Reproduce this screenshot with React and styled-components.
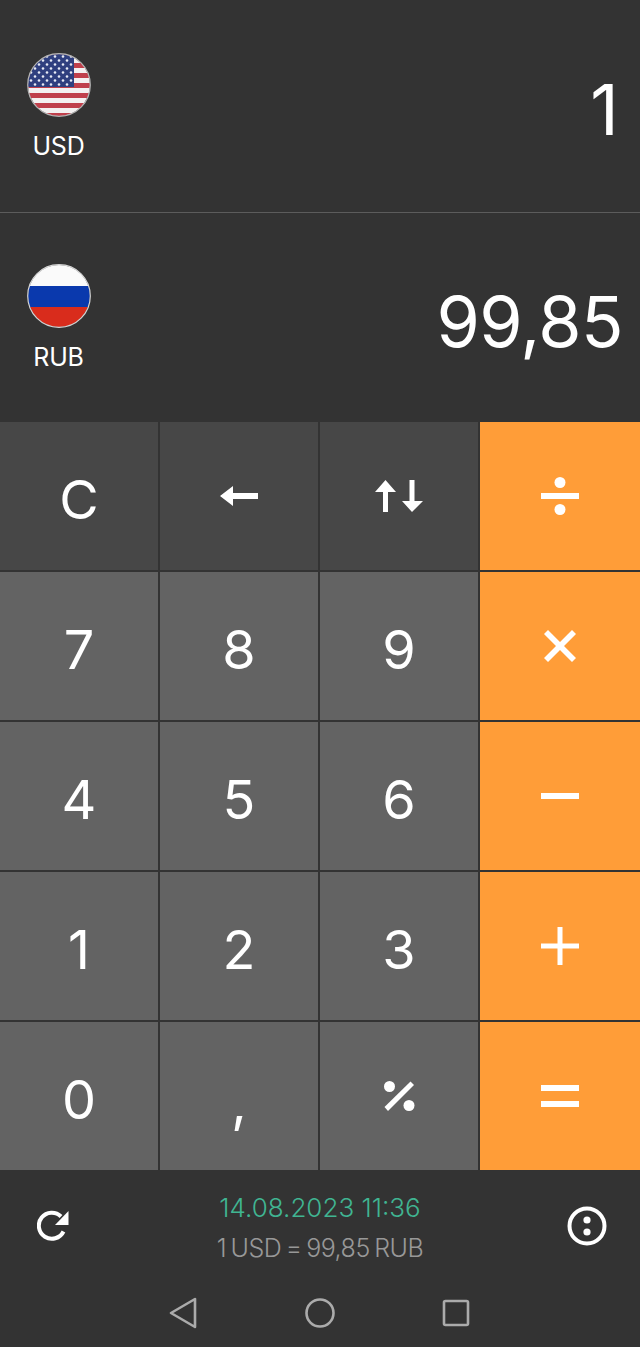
import React from 'react';
import styled, { createGlobalStyle } from 'styled-components';

const GlobalStyle = createGlobalStyle`
  html, body {
    margin: 0;
    padding: 0;
    background: #333333;
  }
  * {
    box-sizing: border-box;
  }
`;

const Screen = styled.div`
  width: 640px;
  height: 1347px;
  display: flex;
  flex-direction: column;
  background: #333333;
  color: #ffffff;
  font-family: Inter, 'Liberation Sans', sans-serif;
  overflow: hidden;
`;

const CurrencyRow = styled.div`
  height: ${(p) => p.$height}px;
  display: flex;
  align-items: center;
  justify-content: space-between;
  padding-right: ${(p) => p.$inset}px;
  border-bottom: ${(p) => (p.$divider ? '1px solid #5c5c5c' : 'none')};
`;

const Currency = styled.div`
  width: 117px;
  display: flex;
  flex-direction: column;
  align-items: center;
  gap: 14px;
  padding-top: ${(p) => (p.$nudge ? '2px' : '0')};
`;

const FlagCircle = styled.svg`
  width: 64px;
  height: 64px;
  display: block;
`;

const Code = styled.div`
  font-size: 25px;
  line-height: 30px;
  font-weight: 400;
  letter-spacing: -0.2px;
`;

const Amount = styled.div`
  font-size: 70px;
  line-height: 84px;
  font-weight: 400;
  letter-spacing: -0.6px;
  padding-top: 8px;
`;

const Keypad = styled.div`
  display: grid;
  grid-template-columns: 158px 158px 158px 160px;
  grid-auto-rows: 148px;
  gap: 2px;
  background: #333333;
`;

const keyColors = {
  fn: '#474747',
  num: '#636363',
  op: '#ff9d38',
};

const Key = styled.div`
  display: flex;
  align-items: center;
  justify-content: center;
  background: ${(p) => keyColors[p.$kind]};
  font-size: 54px;
  font-weight: 400;
  line-height: 1;
  padding-top: ${(p) => (p.$drop ? '14px' : '8px')};
`;

const IconKey = styled(Key)`
  padding-top: 0;
`;

const KeyIcon = styled.svg`
  display: block;
  fill: #ffffff;
  stroke: none;
`;

const Footer = styled.div`
  flex: 1;
  display: flex;
  flex-direction: column;
`;

const Status = styled.div`
  height: 112px;
  display: flex;
  align-items: center;
  justify-content: space-between;
  padding: 0 33px 0 37px;
`;

const StatusText = styled.div`
  display: flex;
  flex-direction: column;
  align-items: center;
  gap: 10px;
  padding: 4px 0 0 4px;
  line-height: 30px;
  font-weight: 300;
`;

const Updated = styled.div`
  color: #40b592;
  font-size: 26px;
`;

const Rate = styled.div`
  color: #989898;
  font-size: 25px;
  letter-spacing: -0.5px;
  word-spacing: -2px;
`;

const ToolIcon = styled.svg`
  display: block;
  flex: none;
`;

const NavBar = styled.div`
  flex: 1;
  display: flex;
  align-items: flex-start;
  justify-content: center;
  gap: 106px;
  padding-top: 15px;
`;

const NavIcon = styled.svg`
  display: block;
  width: 30px;
  height: 32px;
  fill: none;
  stroke: #ababab;
  stroke-width: 2.6;
  stroke-linejoin: round;
`;

const stars = [];
for (let row = 0; row < 8; row += 1) {
  const count = row % 2 === 0 ? 6 : 5;
  for (let col = 0; col < count; col += 1) {
    stars.push({
      x: (row % 2 === 0 ? 4 : 8) + col * 8,
      y: 3.5 + row * 4,
    });
  }
}

const UsaFlag = () => (
  <FlagCircle viewBox="0 0 64 64">
    <defs>
      <clipPath id="usaClip">
        <circle cx="32" cy="32" r="31" />
      </clipPath>
    </defs>
    <g clipPath="url(#usaClip)">
      <rect width="64" height="64" fill="#f4f1f1" />
      {Array.from({ length: 7 }).map((_, i) => (
        <rect key={i} y={i * 10} width="64" height="5" fill="#c0404c" />
      ))}
      <rect width="47" height="34" fill="#2f3f7f" />
      {stars.map((s, i) => (
        <circle key={i} cx={s.x} cy={s.y} r="1.3" fill="#e8ebf5" />
      ))}
    </g>
    <circle cx="32" cy="32" r="31.3" fill="none" stroke="#b5b5b5" strokeWidth="1.2" />
  </FlagCircle>
);

const RussiaFlag = () => (
  <FlagCircle viewBox="0 0 64 64">
    <defs>
      <clipPath id="rusClip">
        <circle cx="32" cy="32" r="31" />
      </clipPath>
    </defs>
    <g clipPath="url(#rusClip)">
      <rect width="64" height="22" fill="#fafafa" />
      <rect y="22" width="64" height="21" fill="#0a39ad" />
      <rect y="43" width="64" height="21" fill="#d92c1c" />
    </g>
    <circle cx="32" cy="32" r="31.3" fill="none" stroke="#d6d6d6" strokeWidth="1.2" />
  </FlagCircle>
);

const Backspace = () => (
  <KeyIcon width="38" height="20" viewBox="0 0 38 20">
    <path d="M0 10 L13 0 V7 H38 V13 H13 V20 Z" />
  </KeyIcon>
);

const Swap = () => (
  <KeyIcon width="48" height="32" viewBox="0 0 48 32">
    <path d="M10.5 0 L21 12 H13 V32 H8 V12 H0 Z" />
    <path d="M34.5 0 H39.5 V21 H48 L37 32 L27 21 H34.5 Z" />
  </KeyIcon>
);

const Divide = () => (
  <KeyIcon width="38" height="38" viewBox="0 0 38 38">
    <circle cx="19" cy="5.5" r="5.5" />
    <rect y="16" width="38" height="6" />
    <circle cx="19" cy="32.5" r="5.5" />
  </KeyIcon>
);

const Times = () => (
  <KeyIcon width="32" height="32" viewBox="0 0 32 32">
    <path d="M4 0 L16 12 L28 0 L32 4 L20 16 L32 28 L28 32 L16 20 L4 32 L0 28 L12 16 L0 4 Z" />
  </KeyIcon>
);

const Minus = () => (
  <KeyIcon width="38" height="6" viewBox="0 0 38 6">
    <rect width="38" height="6" />
  </KeyIcon>
);

const Plus = () => (
  <KeyIcon width="38" height="38" viewBox="0 0 38 38">
    <rect y="16.5" width="38" height="5" />
    <rect x="16.5" width="5" height="38" />
  </KeyIcon>
);

const Equals = () => (
  <KeyIcon width="38" height="22" viewBox="0 0 38 22">
    <rect width="38" height="6" />
    <rect y="16" width="38" height="6" />
  </KeyIcon>
);

const Percent = () => (
  <KeyIcon width="31" height="30" viewBox="0 0 31 30">
    <circle cx="5.5" cy="5.5" r="5.5" />
    <circle cx="25" cy="24.5" r="5.5" />
    <path d="M26.5 0.5 L30 4 L4 30 L0.5 26 Z" />
  </KeyIcon>
);

const keys = [
  { label: 'C', kind: 'fn' },
  { icon: <Backspace />, kind: 'fn' },
  { icon: <Swap />, kind: 'fn' },
  { icon: <Divide />, kind: 'op' },
  { label: '7', kind: 'num' },
  { label: '8', kind: 'num' },
  { label: '9', kind: 'num' },
  { icon: <Times />, kind: 'op' },
  { label: '4', kind: 'num' },
  { label: '5', kind: 'num' },
  { label: '6', kind: 'num' },
  { icon: <Minus />, kind: 'op' },
  { label: '1', kind: 'num' },
  { label: '2', kind: 'num' },
  { label: '3', kind: 'num' },
  { icon: <Plus />, kind: 'op' },
  { label: '0', kind: 'num' },
  { label: ',', kind: 'num', drop: true },
  { icon: <Percent />, kind: 'num' },
  { icon: <Equals />, kind: 'op' },
];

const App = () => (
  <Screen>
    <GlobalStyle />
    <CurrencyRow $height={213} $inset={22} $divider>
      <Currency $nudge>
        <UsaFlag />
        <Code>USD</Code>
      </Currency>
      <Amount>1</Amount>
    </CurrencyRow>
    <CurrencyRow $height={209} $inset={17}>
      <Currency>
        <RussiaFlag />
        <Code>RUB</Code>
      </Currency>
      <Amount>99,85</Amount>
    </CurrencyRow>

    <Keypad>
      {keys.map((k, i) =>
        k.icon ? (
          <IconKey key={i} $kind={k.kind}>
            {k.icon}
          </IconKey>
        ) : (
          <Key key={i} $kind={k.kind} $drop={k.drop}>
            {k.label}
          </Key>
        ),
      )}
    </Keypad>

    <Footer>
      <Status>
        <ToolIcon width="32" height="32" viewBox="0 0 32 32">
          <path
            d="M26.5 21.5 A13 13 0 1 1 24 6.5"
            fill="none"
            stroke="#ffffff"
            strokeWidth="4"
          />
          <path d="M31.5 1 V15 H18 Z" fill="#ffffff" />
        </ToolIcon>
        <StatusText>
          <Updated>14.08.2023 11:36</Updated>
          <Rate>1 USD = 99,85 RUB</Rate>
        </StatusText>
        <ToolIcon width="40" height="40" viewBox="0 0 40 40">
          <circle cx="20" cy="20" r="17.5" fill="none" stroke="#ffffff" strokeWidth="4" />
          <circle cx="20" cy="14" r="3.6" fill="#ffffff" />
          <circle cx="20" cy="26" r="3.6" fill="#ffffff" />
        </ToolIcon>
      </Status>
      <NavBar>
        <NavIcon viewBox="0 0 30 32">
          <path d="M26 2 V30 L2 16 Z" />
        </NavIcon>
        <NavIcon viewBox="0 0 30 32">
          <circle cx="15" cy="16" r="13.5" />
        </NavIcon>
        <NavIcon viewBox="0 0 30 32">
          <rect x="3" y="4" width="24" height="24" rx="1.5" />
        </NavIcon>
      </NavBar>
    </Footer>
  </Screen>
);

export default App;
